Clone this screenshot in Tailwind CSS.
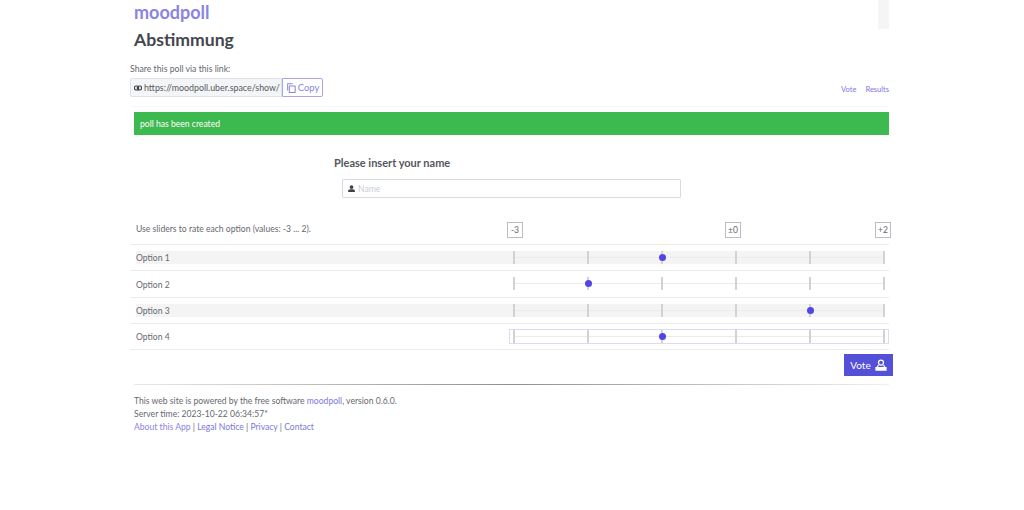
<!DOCTYPE html>
<html lang="en">
<head>
    <meta charset="UTF-8">
    <title>moodpoll</title>
    <script src="https://cdn.jsdelivr.net/npm/@tailwindcss/browser@4"></script>
</head>
<body class="bg-white h-[510px] overflow-hidden font-['Lato',sans-serif] text-[8.6px] text-[#66686f]">
<div class="w-[763px] ml-[130px]">
    <!-- Header -->
    <div class="flex justify-between h-[28px] w-[759px]">
        <a class="pl-1 text-[18px] leading-[24px] font-bold text-[#8a84e2]">moodpoll</a>
        <div class="w-[11px] h-[29px] bg-[#f5f5f5]"></div>
    </div>
    <h1 class="pl-1 text-[17.6px] leading-[24px] font-bold text-[#43464e]">Abstimmung</h1>

    <!-- Share link -->
    <div class="mt-[11px] w-[759px] flex justify-between items-end pb-[9px] border-b border-[#f7f7f7]">
        <div>
            <div class="text-[8.7px] leading-[12px] mb-[3px]">Share this poll via this link:</div>
            <div class="flex h-[19px]">
                <div class="w-[152px] flex items-center gap-[2px] pl-[3px] bg-[#f4f5f7] border border-[#e0e1e6] rounded-l-[2px] text-[#55585f] whitespace-nowrap">
                    <svg class="w-[8px] h-[8px] shrink-0" viewBox="0 0 24 24" fill="none" stroke="#3f424a" stroke-width="3.5"><rect x="1" y="6" width="13" height="12" rx="6"/><rect x="10" y="6" width="13" height="12" rx="6"/></svg>
                    <span class="text-[8.85px] pt-px">https://moodpoll.uber.space/show/</span>
                </div>
                <button class="w-[41px] flex items-center justify-center gap-[2px] border border-[#a9a4f0] rounded-r-[2px] text-[#8a84e2] text-[9.5px]">
                    <svg class="w-[10px] h-[10px] shrink-0" viewBox="0 0 24 24" fill="none" stroke="#8a84e2" stroke-width="2.5"><rect x="8" y="7" width="14" height="16" rx="1"/><path d="M4 18V2h12"/></svg>
                    <span class="pt-px">Copy</span>
                </button>
            </div>
        </div>
        <div class="flex gap-[9px] text-[7.5px] leading-[12px] text-[#7d77e0] pb-[1px]">
            <a>Vote</a>
            <a>Results</a>
        </div>
    </div>

    <!-- Flash message -->
    <div class="mt-[5px] ml-1 w-[755px] h-[23px] pl-[6px] pt-[2px] flex items-center bg-[#3cb94f] text-white">poll has been created</div>

    <!-- Name -->
    <div class="mt-[21px] pl-[204px] text-[11px] leading-[14px] font-bold text-[#55575e]">Please insert your name</div>
    <div class="mt-[9px] ml-[212px] w-[339px] h-[19px] flex items-center gap-[2px] pl-[4px] border border-[#d9dae3] rounded-[1px] text-[#c9ccd6]">
        <svg class="w-[9px] h-[9px] shrink-0" viewBox="0 0 24 24" fill="#3f424a"><circle cx="12" cy="8" r="5"/><path d="M3 21v-3c0-3 5-4 9-4s9 1 9 4v3z"/></svg>
        <span class="pt-[2px]">Name</span>
    </div>

    <!-- Ratings table -->
    <div class="w-[759px] mt-[19px]">
        <div class="flex items-center h-[28px] border-b border-[#ececec] pb-[3px]">
            <div class="w-[377px] shrink-0 pl-[6px]">Use sliders to rate each option (values: -3 ... 2).</div>
            <div class="flex-1 flex items-center mt-[2px]">
                <span class="w-[16px] h-[16px] shrink-0 flex items-center justify-center border border-[#bdbdbd] text-[8.5px]">-3</span>
                <span class="ml-[202px] w-[16px] h-[16px] shrink-0 flex items-center justify-center border border-[#bdbdbd] text-[8.5px]">±0</span>
                <span class="ml-[134px] w-[16px] h-[16px] shrink-0 flex items-center justify-center border border-[#bdbdbd] text-[8.5px]">+2</span>
            </div>
        </div>

        <div class="h-[26.3px] flex items-center border-b border-[#ececec]">
            <div class="ml-[6px] w-[749px] h-[13px] bg-[#f4f4f4] flex items-center relative">
                <span class="w-[377px] pt-[2px]">Option 1</span>
                <div class="w-[372px] h-[13px] flex justify-between relative">
                    <div class="absolute left-0 right-0 top-[6px] h-px bg-[#ebebeb]"></div>
                    <i class="w-[2px] h-[13px] bg-[#d2d2d2] z-10"></i><i class="w-[2px] h-[13px] bg-[#d2d2d2] z-10"></i><i class="w-[2px] h-[13px] bg-[#d2d2d2] z-10"></i><i class="w-[2px] h-[13px] bg-[#d2d2d2] z-10"></i><i class="w-[2px] h-[13px] bg-[#d2d2d2] z-10"></i><i class="w-[2px] h-[13px] bg-[#d2d2d2] z-10"></i>
                    <div class="absolute left-[145.5px] top-[3px] w-[7px] h-[7px] rounded-full bg-[#4f46e5] z-20"></div>
                </div>
            </div>
        </div>

        <div class="h-[26.3px] flex items-center border-b border-[#ececec]">
            <div class="ml-[6px] w-[749px] h-[13px] flex items-center relative">
                <span class="w-[377px] pt-[2px]">Option 2</span>
                <div class="w-[372px] h-[13px] flex justify-between relative">
                    <div class="absolute left-0 right-0 top-[6px] h-px bg-[#ebebeb]"></div>
                    <i class="w-[2px] h-[13px] bg-[#d2d2d2] z-10"></i><i class="w-[2px] h-[13px] bg-[#d2d2d2] z-10"></i><i class="w-[2px] h-[13px] bg-[#d2d2d2] z-10"></i><i class="w-[2px] h-[13px] bg-[#d2d2d2] z-10"></i><i class="w-[2px] h-[13px] bg-[#d2d2d2] z-10"></i><i class="w-[2px] h-[13px] bg-[#d2d2d2] z-10"></i>
                    <div class="absolute left-[71.5px] top-[3px] w-[7px] h-[7px] rounded-full bg-[#4f46e5] z-20"></div>
                </div>
            </div>
        </div>

        <div class="h-[26.3px] flex items-center border-b border-[#ececec]">
            <div class="ml-[6px] w-[749px] h-[13px] bg-[#f4f4f4] flex items-center relative">
                <span class="w-[377px] pt-[2px]">Option 3</span>
                <div class="w-[372px] h-[13px] flex justify-between relative">
                    <div class="absolute left-0 right-0 top-[6px] h-px bg-[#ebebeb]"></div>
                    <i class="w-[2px] h-[13px] bg-[#d2d2d2] z-10"></i><i class="w-[2px] h-[13px] bg-[#d2d2d2] z-10"></i><i class="w-[2px] h-[13px] bg-[#d2d2d2] z-10"></i><i class="w-[2px] h-[13px] bg-[#d2d2d2] z-10"></i><i class="w-[2px] h-[13px] bg-[#d2d2d2] z-10"></i><i class="w-[2px] h-[13px] bg-[#d2d2d2] z-10"></i>
                    <div class="absolute left-[293.5px] top-[3px] w-[7px] h-[7px] rounded-full bg-[#4f46e5] z-20"></div>
                </div>
            </div>
        </div>

        <div class="h-[26.3px] flex items-center border-b border-[#ececec]">
            <div class="ml-[6px] w-[749px] h-[13px] flex items-center relative">
                <span class="w-[377px] pt-[2px]">Option 4</span>
                <div class="w-[372px] h-[13px] flex justify-between relative">
                    <div class="absolute left-[-4px] right-[-4px] top-[-1px] bottom-[-1px] border border-[#dcdaf7]"></div>
                    <div class="absolute left-0 right-0 top-[6px] h-px bg-[#ebebeb]"></div>
                    <i class="w-[2px] h-[13px] bg-[#d2d2d2] z-10"></i><i class="w-[2px] h-[13px] bg-[#d2d2d2] z-10"></i><i class="w-[2px] h-[13px] bg-[#d2d2d2] z-10"></i><i class="w-[2px] h-[13px] bg-[#d2d2d2] z-10"></i><i class="w-[2px] h-[13px] bg-[#d2d2d2] z-10"></i><i class="w-[2px] h-[13px] bg-[#d2d2d2] z-10"></i>
                    <div class="absolute left-[145.5px] top-[3px] w-[7px] h-[7px] rounded-full bg-[#4f46e5] z-20"></div>
                </div>
            </div>
        </div>
    </div>

    <!-- Vote button -->
    <div class="flex justify-end mt-[4px]">
        <button class="w-[49px] h-[22px] flex items-center justify-center gap-[4px] bg-[#5450d8] text-white text-[10px]">
            Vote
            <svg class="w-[12px] h-[12px] shrink-0" viewBox="0 0 24 24" fill="none" stroke="white" stroke-width="2.5"><circle cx="12" cy="7" r="5"/><path d="M7 12l-3 5h16l-3-5"/><path d="M2 17h20v5H2z" fill="white"/></svg>
        </button>
    </div>

    <!-- Footer -->
    <div class="mt-[8px] ml-1 w-[755px] h-px bg-gradient-to-r from-[#e8e8e8] via-[#8f8f8f] to-[#f0f0f0]"></div>
    <div class="mt-[10px] pl-1 leading-[13px]">
        <div>This web site is powered by the free software <a class="text-[#7d77e0]">moodpoll</a>, version 0.6.0.</div>
        <div>Server time: 2023-10-22 06:34:57*</div>
        <div><a class="text-[#8a84e2]">About this App</a> | <a class="text-[#7d77e0]">Legal Notice</a> | <a class="text-[#7d77e0]">Privacy</a> | <a class="text-[#7d77e0]">Contact</a></div>
    </div>
</div>
</body>
</html>
